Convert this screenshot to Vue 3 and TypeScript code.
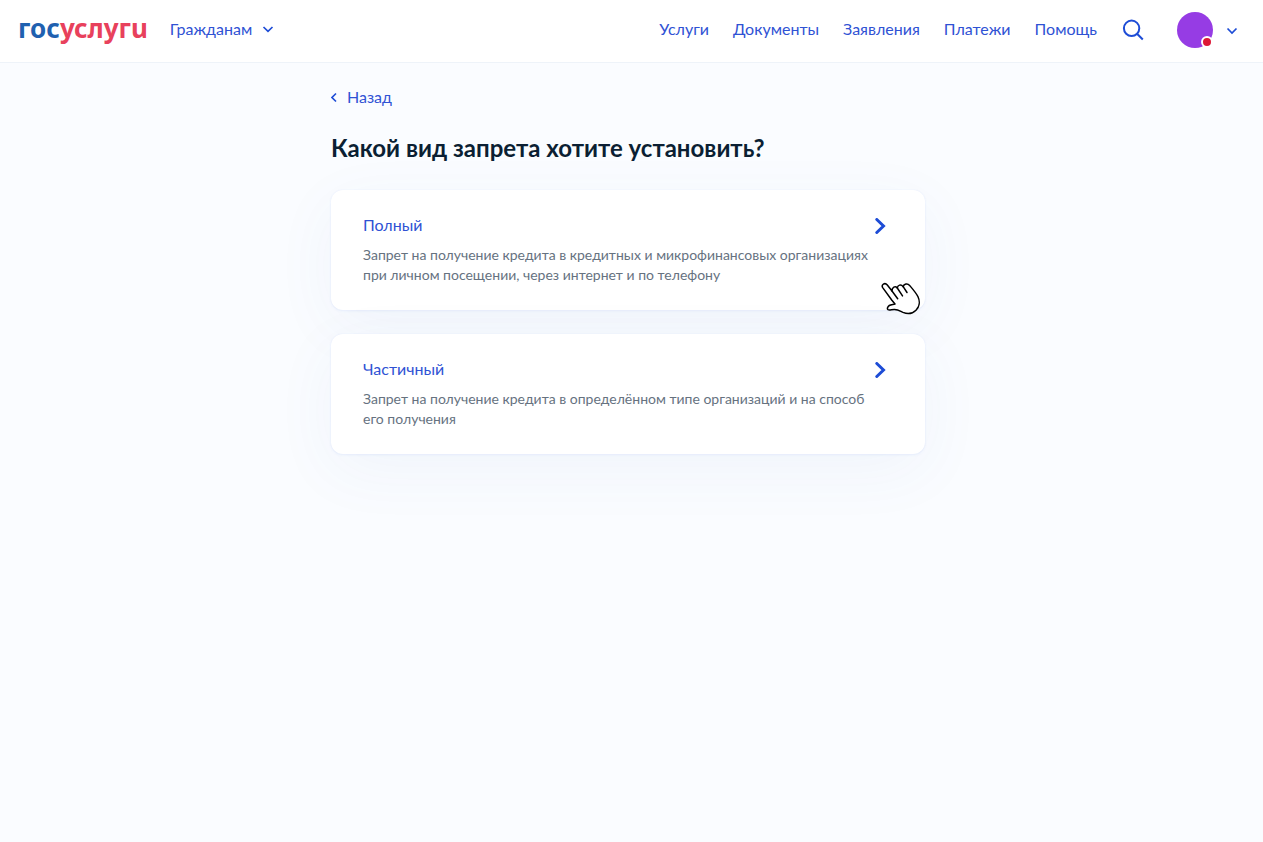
<script setup lang="ts">
interface NavItem {
  label: string
  href: string
}

interface BanOption {
  id: string
  title: string
  text: string
  pointed: boolean
}

const nav: NavItem[] = [
  { label: 'Услуги', href: '#services' },
  { label: 'Документы', href: '#documents' },
  { label: 'Заявления', href: '#applications' },
  { label: 'Платежи', href: '#payments' },
  { label: 'Помощь', href: '#help' },
]

const options: BanOption[] = [
  {
    id: 'full',
    title: 'Полный',
    text: 'Запрет на получение кредита в кредитных и микрофинансовых организациях при личном посещении, через интернет и по телефону',
    pointed: true,
  },
  {
    id: 'partial',
    title: 'Частичный',
    text: 'Запрет на получение кредита в определённом типе организаций и на способ его получения',
    pointed: false,
  },
]
</script>

<template>
  <div class="page">
    <header class="header">
      <a class="logo" href="#home"><span class="logo-blue">гос</span><span class="logo-red">услугu</span></a>
      <button class="audience" type="button">
        Гражданам
        <svg width="12" height="8" viewBox="0 0 12 8" aria-hidden="true">
          <path d="M1.500 2L6 6.300 10.500 2" />
        </svg>
      </button>
      <nav class="nav">
        <a v-for="item in nav" :key="item.href" :href="item.href">{{ item.label }}</a>
      </nav>
      <button class="search" type="button" aria-label="Поиск">
        <svg width="22" height="22" viewBox="0 0 22 22" aria-hidden="true">
          <circle cx="9.6" cy="9.3" r="7.7" />
          <path d="M15 14.700l5.800 5.800" />
        </svg>
      </button>
      <button class="profile" type="button" aria-label="Профиль">
        <span class="avatar"><span class="dot"></span></span>
        <svg width="12" height="10" viewBox="0 0 12 10" aria-hidden="true">
          <path d="M1.500 3.500L6 8l4.500-4.500" />
        </svg>
      </button>
    </header>

    <main class="main">
      <div class="content">
        <a class="back" href="#back">
          <svg width="8" height="12" viewBox="0 0 8 12" aria-hidden="true">
            <path d="M5 2.500L1 6.500l4 4" />
          </svg>
          Назад
        </a>
        <h1>Какой вид запрета хотите установить?</h1>
        <div class="options">
          <button v-for="option in options" :key="option.id" class="card" type="button">
            <span class="card-body">
              <span class="card-title">{{ option.title }}</span>
              <span class="card-text">{{ option.text }}</span>
            </span>
            <svg class="card-arrow" width="12" height="16" viewBox="0 0 12 16" aria-hidden="true">
              <path d="M1.800 1.500L8.500 8l-6.700 6.500" />
            </svg>
            <svg v-if="option.pointed" class="pointer" width="40" height="34" viewBox="0 0 40 34" aria-hidden="true">
              <path
                d="M14 22L10.700 18L1.700 5.600C0 2.800 3.800 0 6.300 3L11 9C10.900 5.300 14.200 3.600 16.300 6C16.600 2.900 20 1.900 22.200 4.700C22.800 1.800 26.600 1 28.600 3.400C31.500 6.800 35.200 11 37 14.800C39.200 19.600 38.400 25 35 28.200C31.500 31.700 26.500 32.300 22 30.400C19 29 16.800 27.600 13.500 27.500C10.800 27.400 8.500 28.500 7 27.700C5.800 26.900 6.600 24.600 8.300 23.500C9.900 22.500 12 22.600 14 22Z"
              />
              <path d="M11 9L16.700 16.700M16.300 6L21.500 13.900M22.200 4.700L26 10.500" />
            </svg>
          </button>
        </div>
      </div>
    </main>
  </div>
</template>

<style>
body {
  background: #fafcff;
}
</style>

<style scoped>
.page {
  min-height: 100vh;
  overflow: hidden;
  background: #fafcff;
  color: #0b1f33;
  font-family: Lato, "Open Sans", sans-serif;
  font-size: 16px;
  line-height: 24px;
}

a {
  color: #2f52d4;
  text-decoration: none;
}

button {
  margin: 0;
  padding: 0;
  border: 0;
  background: none;
  color: #2f52d4;
  font: inherit;
  text-align: left;
  cursor: pointer;
}

svg {
  display: block;
  flex: none;
  fill: none;
  stroke: #1d4cd6;
  stroke-width: 2;
}

.header {
  display: flex;
  align-items: center;
  box-sizing: border-box;
  height: 63px;
  padding: 0 25px 3px 18px;
  border-bottom: 1px solid #eef3f9;
  background: #fff;
}

.logo {
  margin-right: 22px;
  padding-bottom: 3px;
  font-family: "Noto Sans", sans-serif;
  font-size: 26px;
  font-weight: 700;
  line-height: 32px;
}

.logo-blue {
  color: #1f61b0;
}

.logo-red {
  color: #e8415c;
}

.audience {
  display: flex;
  align-items: center;
  gap: 10px;
  padding-bottom: 2px;
}

.audience svg,
.profile svg {
  stroke-width: 1.7;
}

.nav {
  display: flex;
  gap: 24px;
  margin-left: auto;
  padding-bottom: 2px;
}

.search {
  margin-left: 25px;
}

.profile {
  display: flex;
  align-items: center;
  gap: 13px;
  margin-left: 33px;
}

.avatar {
  position: relative;
  width: 36px;
  height: 36px;
  border-radius: 50%;
  background: #963ce4;
}

.dot {
  position: absolute;
  right: 0;
  bottom: 0;
  width: 8px;
  height: 8px;
  border: 2px solid #fff;
  border-radius: 50%;
  background: #dd1836;
}

.main {
  display: flex;
  justify-content: center;
  padding: 22px 31px 48px 24px;
}

.content {
  width: 100%;
  max-width: 594px;
}

.back {
  display: inline-flex;
  align-items: center;
  gap: 8px;
}

.back svg {
  stroke-width: 1.6;
}

h1 {
  margin: 22px 0 25px;
  font-size: 24px;
  font-weight: 700;
  line-height: 34px;
}

.options {
  display: flex;
  flex-direction: column;
  gap: 24px;
}

.card {
  position: relative;
  display: flex;
  justify-content: space-between;
  padding: 23px 38px 25px 32px;
  border-radius: 12px;
  background: #fff;
  box-shadow: 0 0 2px rgba(60, 110, 230, 0.06), 0 1px 3px rgba(60, 110, 230, 0.08), 0 16px 64px rgba(50, 100, 170, 0.05);
}

.card-body {
  display: flex;
  flex-direction: column;
  gap: 8px;
  max-width: 508px;
}

.card-text {
  color: #66727f;
  font-size: 14px;
  line-height: 20px;
}

.card-arrow {
  margin-top: 5px;
  stroke-width: 3;
  stroke-linecap: round;
}

.pointer {
  position: absolute;
  right: 4px;
  bottom: -6px;
  z-index: 1;
  fill: #fff;
  stroke: #000;
  stroke-width: 1.5;
  stroke-linecap: round;
  stroke-linejoin: round;
}
</style>
